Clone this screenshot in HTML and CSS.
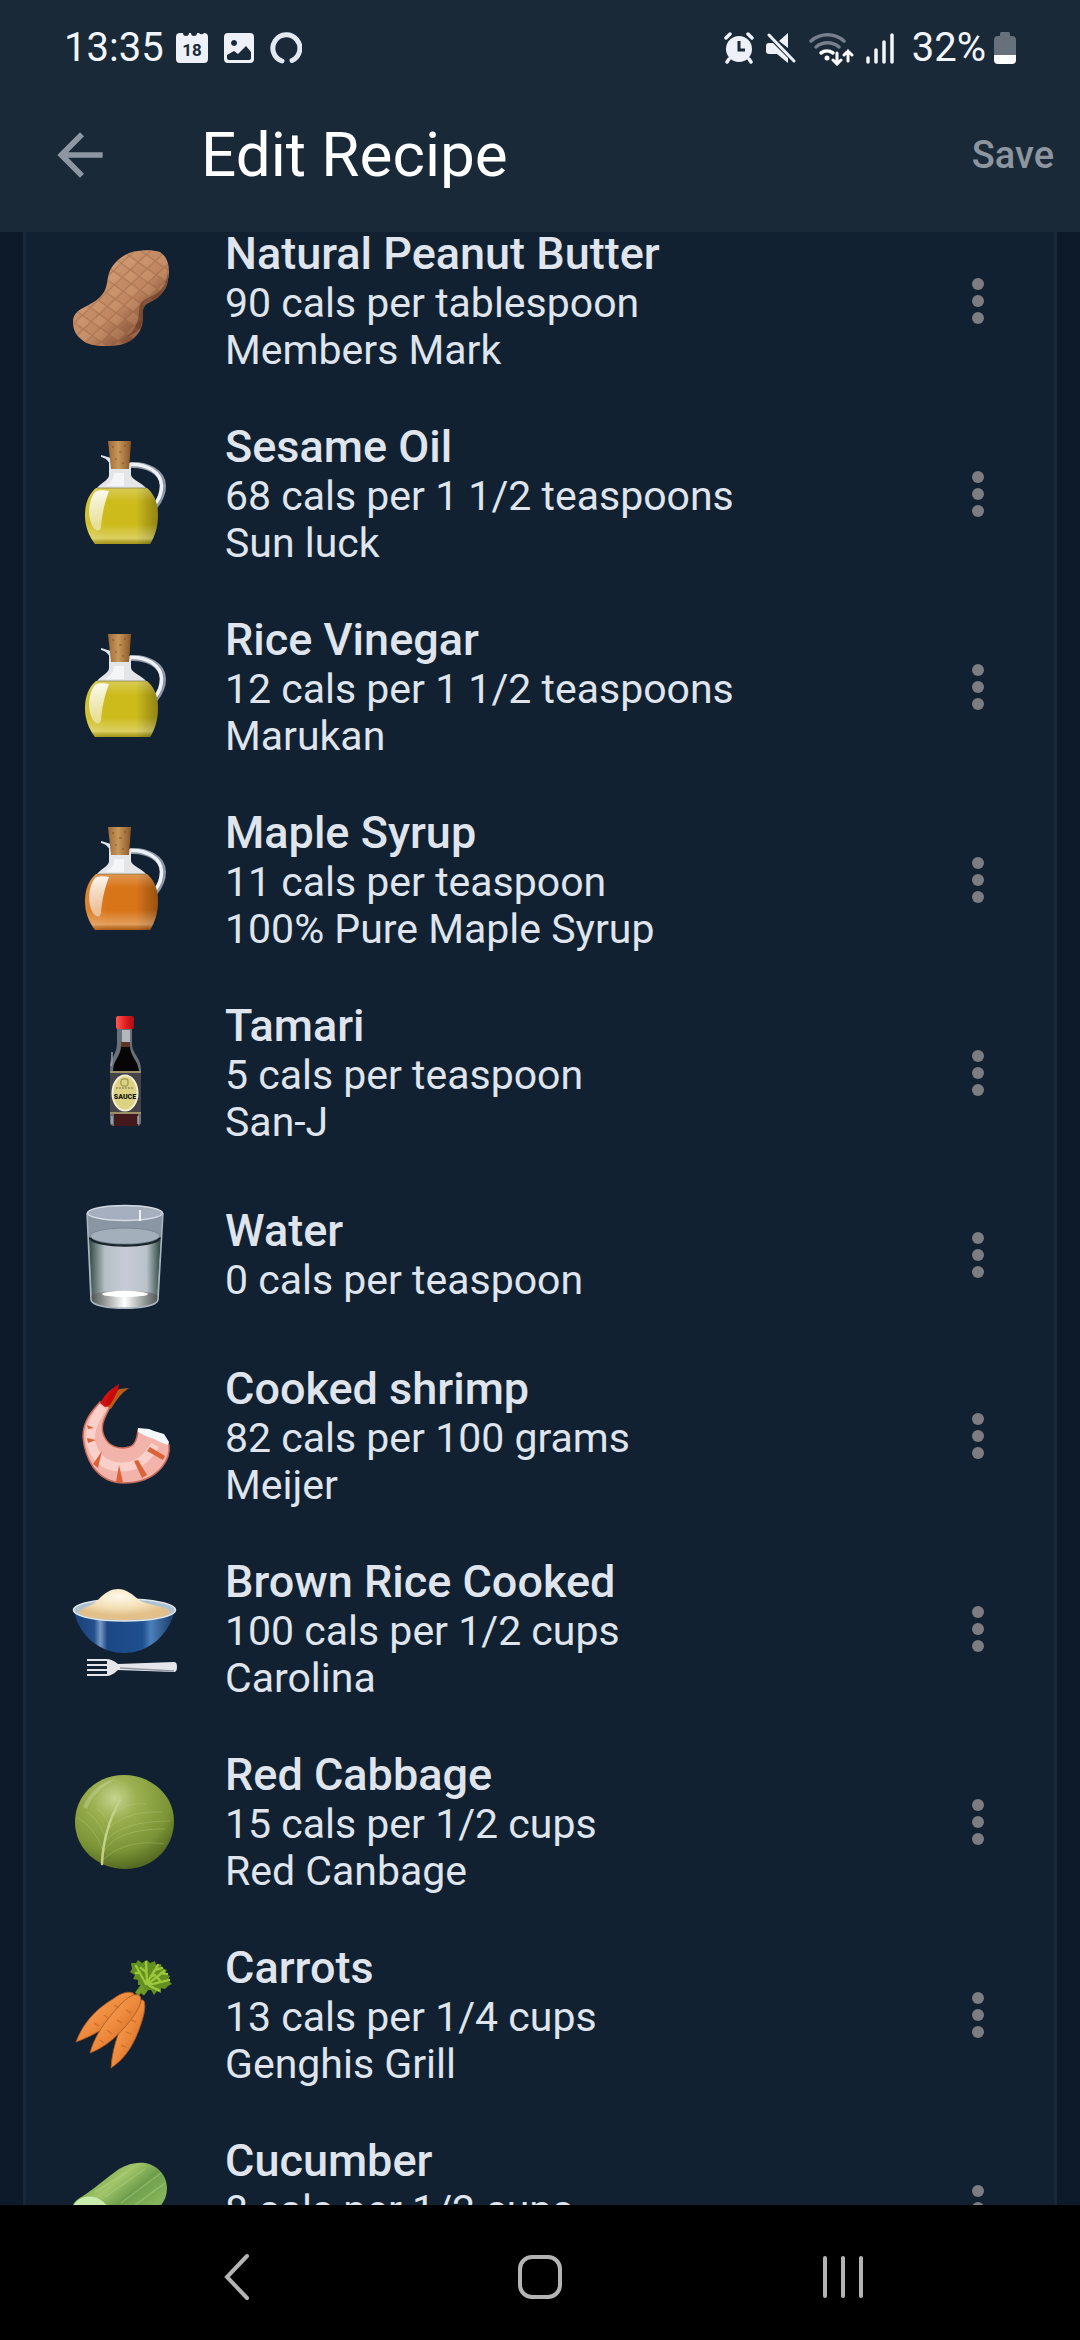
FILE: index.html
```html
<!DOCTYPE html>
<html lang="en">
<head>
    <meta charset="UTF-8">
    <meta name="viewport" content="width=device-width, initial-scale=1.0">
    <title>Edit Recipe</title>
    <link rel="stylesheet" href="styles.css">
</head>
<body>
    <!-- Shared gradients and symbols -->
    <svg class="defs" width="0" height="0" aria-hidden="true">
        <defs>
            <linearGradient id="cork" x1="0" x2="1"><stop offset="0" stop-color="#9c6a38"/><stop offset=".45" stop-color="#c8975c"/><stop offset="1" stop-color="#8a5826"/></linearGradient>
            <linearGradient id="liquidSides" x1="0" x2="1"><stop offset="0" stop-color="#fff" stop-opacity=".12"/><stop offset=".3" stop-color="#fff" stop-opacity="0"/><stop offset=".7" stop-color="#000" stop-opacity="0"/><stop offset="1" stop-color="#000" stop-opacity=".3"/></linearGradient>
            <linearGradient id="liquidShine" x1="0" y1="0" x2="0" y2="1"><stop offset="0" stop-color="#fff" stop-opacity=".25"/><stop offset=".25" stop-color="#fff" stop-opacity="0"/><stop offset=".65" stop-color="#fff" stop-opacity="0"/><stop offset=".9" stop-color="#fff" stop-opacity=".3"/><stop offset="1" stop-color="#000" stop-opacity=".2"/></linearGradient>
            <linearGradient id="highlight" x1="0" y1="0" x2="0" y2="1"><stop offset="0" stop-color="#fff" stop-opacity=".9"/><stop offset="1" stop-color="#fff" stop-opacity=".45"/></linearGradient>
            <linearGradient id="peanut" x1="0" y1="0" x2="1" y2="1"><stop offset=".2" stop-color="#d09a72"/><stop offset=".55" stop-color="#bf8660"/><stop offset=".85" stop-color="#6e3d27"/></linearGradient>
            <pattern id="shell" width="17" height="14" patternUnits="userSpaceOnUse" patternTransform="rotate(-4)"><path d="M0 7 8.5 0 17 7 8.5 14z" fill="#dda981" fill-opacity=".25" stroke="#93603f" stroke-opacity=".5" stroke-width="1.3"/></pattern>
            <linearGradient id="glass" x1="0" x2="1"><stop offset="0" stop-color="#30493f"/><stop offset=".22" stop-color="#b5bfc6"/><stop offset=".5" stop-color="#c6ccd5"/><stop offset=".8" stop-color="#b9c2ca"/><stop offset="1" stop-color="#2c443c"/></linearGradient>
            <linearGradient id="base" x1="0" x2="1"><stop offset="0" stop-color="#4c5450"/><stop offset=".5" stop-color="#fff"/><stop offset="1" stop-color="#4c5450"/></linearGradient>
            <linearGradient id="bowl" x1="0" x2="1"><stop offset="0" stop-color="#1a4076"/><stop offset=".2" stop-color="#24508c"/><stop offset=".26" stop-color="#7699c4"/><stop offset=".33" stop-color="#1c4885"/><stop offset=".68" stop-color="#1e4f8f"/><stop offset=".76" stop-color="#4c80bb"/><stop offset="1" stop-color="#173762"/></linearGradient>
            <radialGradient id="rice" cx=".45" cy=".25" r=".6"><stop offset="0" stop-color="#fff9ea"/><stop offset=".6" stop-color="#f3dfb6"/><stop offset="1" stop-color="#e3c08a"/></radialGradient>
            <radialGradient id="cabbage" cx=".4" cy=".25" r=".75"><stop offset="0" stop-color="#c6d490"/><stop offset=".3" stop-color="#9bb050"/><stop offset=".75" stop-color="#7b9436"/><stop offset="1" stop-color="#566b22"/></radialGradient>
            <linearGradient id="carrot" x1="0" y1="0" x2="1" y2="1"><stop offset="0" stop-color="#f8b06a"/><stop offset=".5" stop-color="#ee8a3c"/><stop offset="1" stop-color="#bd5a18"/></linearGradient>
            <linearGradient id="cucumber" x1="0" y1="0" x2="1" y2="1"><stop offset=".1" stop-color="#66953e"/><stop offset=".35" stop-color="#a2c56a"/><stop offset=".5" stop-color="#6f9f4c"/><stop offset=".7" stop-color="#86b45c"/><stop offset="1" stop-color="#4c7c34"/></linearGradient>
            <linearGradient id="cap" x1="0" x2="1"><stop offset="0" stop-color="#ff5a52"/><stop offset=".5" stop-color="#e22222"/><stop offset="1" stop-color="#a80d12"/></linearGradient>
        </defs>
        <symbol id="flask" viewBox="0 0 112 112">
            <path d="M61 26c17-1 33 7 33 21 0 8-3 14-8 20" fill="none" stroke="#8e99a8" stroke-width="6"/>
            <path d="M61 25.5c16-1 31 7 31.500 21 0 8-2 13-6 18" fill="none" stroke="#eef2f6" stroke-width="3.5"/>
            <path d="M32 16l10 3v9c-2-6-5-9-10-10z" fill="#dfe6ee"/>
            <path d="M40 24h22v12c1 5 10 7 16 14H27c6-7 13-9 13-14z" fill="#e3e5e9"/>
            <path d="M45 34h10v13H36c6-4 9-7 9-13z" fill="#fff" opacity=".6"/>
            <path d="M27 49h51c7 6 11 15 11 27 0 11-3 21-8 29H26c-6-8-10-17-10-29 0-12 4-21 11-27z" fill="currentColor"/>
            <path d="M27 49h51c7 6 11 15 11 27 0 11-3 21-8 29H26c-6-8-10-17-10-29 0-12 4-21 11-27z" fill="url(#liquidSides)"/>
            <path d="M27 49h51c7 6 11 15 11 27 0 11-3 21-8 29H26c-6-8-10-17-10-29 0-12 4-21 11-27z" fill="url(#liquidShine)"/>
            <path d="M28 49h49" stroke="#6f6c35" stroke-opacity=".6"/>
            <path d="M26 53c3-2 9-2 14-1-5 13-7 24-8 36-1 5-5 4-8 0-6-10-5-26 2-35z" fill="url(#highlight)"/>
            <path d="M39 2h23l-2 28H42z" fill="url(#cork)"/>
            <path d="M43 8h2M50 13h3M55 7h2M46 20h2M53 24h2" stroke="#76461c" stroke-width="1.5" opacity=".5"/>
        </symbol>
        <symbol id="dots" viewBox="0 0 72 72">
            <circle cx="36" cy="18" r="6"/><circle cx="36" cy="35" r="6"/><circle cx="36" cy="52" r="6"/>
        </symbol>
    </svg>

    <header class="header">
        <div class="status-bar">
            <span class="status-text">13:35</span>
            <div class="status-icons left">
                <svg width="32" height="32" viewBox="0 0 32 32">
                    <path d="M4 1h3a3 3 0 0 0 6 0h2a3 3 0 0 0 6 0h2a3 3 0 0 0 5 0q4 0 4 4v22q0 4-4 4H4q-4 0-4-4V5q0-4 4-4z" fill="#eef2f8"/>
                    <text class="calendar-day" x="16" y="24" text-anchor="middle">18</text>
                </svg>
                <svg width="32" height="32" viewBox="0 0 32 32">
                    <path fill-rule="evenodd" d="M5 1h22q4 0 4 4v22q0 4-4 4H5q-4 0-4-4V5q0-4 4-4zM4 23v3q0 2 2 2h20q2 0 2-2v-6l-5-6-8 8-4-3zM11 8a3 3 0 1 0 .1 0z" fill="#eef2f8"/>
                </svg>
                <svg width="32" height="32" viewBox="0 0 32 32" fill="none" stroke="#e2e9f3" stroke-width="5" stroke-linecap="round">
                    <path d="M12 29A13.5 13.5 0 1 1 22 28.500"/>
                </svg>
            </div>
            <div class="status-icons right">
                <svg width="30" height="32" viewBox="0 0 30 32" fill="none" stroke="#eef2f8" stroke-linecap="round">
                    <circle cx="15" cy="17" r="13" fill="#eef2f8" stroke="none"/>
                    <path d="M2 6l4-4M28 6l-4-4M5 27l-2 3M25 27l2 3" stroke-width="3.5"/>
                    <path d="M15 9v9h6" stroke="#1a2938" stroke-width="3" stroke-linecap="butt"/>
                </svg>
                <svg width="30" height="32" viewBox="0 0 30 32" fill="#eef2f8">
                    <path d="M0 14q0-3 3-3h4l15 15v5L11 22H3q-3 0-3-3zM13 9l9-8v15z"/>
                    <path d="M3 3l25 26" stroke="#eef2f8" stroke-width="3" stroke-linecap="round"/>
                </svg>
                <svg width="46" height="36" viewBox="0 0 46 36" fill="none" stroke-width="3.5" stroke-linecap="round">
                    <path d="M3 11a25 25 0 0 1 33 0M8 17a18 18 0 0 1 23 0" stroke="#75808c"/>
                    <path d="M13 23a10 10 0 0 1 12 0" stroke="#fff"/>
                    <circle cx="19" cy="28" r="2.5" fill="#fff"/>
                    <path d="M29 23v10M25 30l4 4 4-4M40 31V21M36 25l4-4 4 4" stroke="#fff" stroke-width="3"/>
                </svg>
                <svg width="28" height="32" viewBox="0 0 28 32" stroke="#f2f6fb" stroke-width="3.5" stroke-linecap="round">
                    <path d="M2 26v4M10 18v12M18 10v20M26 3v27"/>
                </svg>
            </div>
            <span class="status-text">32%</span>
            <svg width="22" height="32" viewBox="0 0 22 32">
                <path d="M7 0h8q1 0 1 4h2q4 0 4 4v16H0V8q0-4 4-4h2q0-4 1-4z" fill="#66717c"/>
                <path d="M0 23h22v5q0 4-4 4H4q-4 0-4-4z" fill="#fff"/>
            </svg>
        </div>
        <div class="app-bar">
            <button class="back" type="button" aria-label="Back">
                <svg width="68" height="68" viewBox="0 0 24 24"><path d="M20 11H7.830l5.590-5.590L12 4l-8 8 8 8 1.410-1.410L7.830 13H20v-2z"/></svg>
            </button>
            <h1>Edit Recipe</h1>
            <button class="save" type="button">Save</button>
        </div>
    </header>

    <main class="content">
        <ul class="ingredients">
            <li class="row">
                <svg class="food" viewBox="0 0 112 112">
                    <path d="M4 76c0-7 4-11 10-14 9-5 16-8 21-16 5-9 2-16 8-25C49 12 58 6 69 5c7-1 16-1 22 1 7 5 9 12 9 20-1 10-2 15-6 20-4 6-9 8-13 10-6 3-7 6-7 11 0 8 0 16-7 23-7 8-17 10-30 10-11 0-19-1-25-7-5-4-8-9-8-17z" fill="url(#peanut)"/>
                    <path d="M4 76c0-7 4-11 10-14 9-5 16-8 21-16 5-9 2-16 8-25C49 12 58 6 69 5c7-1 16-1 22 1 7 5 9 12 9 20-1 10-2 15-6 20-4 6-9 8-13 10-6 3-7 6-7 11 0 8 0 16-7 23-7 8-17 10-30 10-11 0-19-1-25-7-5-4-8-9-8-17z" fill="url(#shell)"/>
                    <path d="M99 24c-1 12-5 21-16 26-10 4-13 7-13 15 0 10-4 20-13 26 16-5 17-14 17-24 0-5 1-8 7-11 12-6 19-13 18-32z" fill="#5a2c1a" opacity=".5"/>
                </svg>
                <div class="info"><h2>Natural Peanut Butter</h2><p>90 cals per tablespoon</p><p>Members Mark</p></div>
                <button class="more" type="button" aria-label="More options"><svg width="72" height="72"><use href="#dots"/></svg></button>
            </li>
            <li class="row">
                <svg class="food" viewBox="0 0 112 112"><use class="flask-oil" href="#flask"/></svg>
                <div class="info"><h2>Sesame Oil</h2><p>68 cals per 1 1/2 teaspoons</p><p>Sun luck</p></div>
                <button class="more" type="button" aria-label="More options"><svg width="72" height="72"><use href="#dots"/></svg></button>
            </li>
            <li class="row">
                <svg class="food" viewBox="0 0 112 112"><use class="flask-oil" href="#flask"/></svg>
                <div class="info"><h2>Rice Vinegar</h2><p>12 cals per 1 1/2 teaspoons</p><p>Marukan</p></div>
                <button class="more" type="button" aria-label="More options"><svg width="72" height="72"><use href="#dots"/></svg></button>
            </li>
            <li class="row">
                <svg class="food" viewBox="0 0 112 112"><use class="flask-syrup" href="#flask"/></svg>
                <div class="info"><h2>Maple Syrup</h2><p>11 cals per teaspoon</p><p>100% Pure Maple Syrup</p></div>
                <button class="more" type="button" aria-label="More options"><svg width="72" height="72"><use href="#dots"/></svg></button>
            </li>
            <li class="row">
                <svg class="food" viewBox="0 0 112 112">
                    <path d="M48 10h15v16c0 10 9 13 9 26v52q0 4-4 4H45q-4 0-4-4V52c0-13 7-16 7-26z" fill="#687078"/>
                    <path d="M52 24h9v4c0 10 8 14 9 25H44c0-11 8-15 8-25z" fill="#070506"/>
                    <path d="M52 24h9v5h-9z" fill="#5c3426"/>
                    <path d="M53 12h8v12h-8z" fill="#b3b8c0"/>
                    <path d="M45 96h24v12H45z" fill="#43191b"/>
                    <path d="M41 53h31v43H41z" fill="#45434a"/>
                    <path d="M41 54h31M41 95h31" stroke="#b8ac70" stroke-width="1.5"/>
                    <ellipse cx="56" cy="75" rx="12.5" ry="17.5" fill="#dcd283" stroke="#f2eed0" stroke-width="2"/>
                    <rect x="52" y="61" width="7" height="7" rx="2" fill="none" stroke="#8e8540"/>
                    <path d="M47 70h18" stroke="#777045" stroke-dasharray="2 1"/>
                    <text class="sauce" x="56" y="81" text-anchor="middle">SAUCE</text>
                    <path d="M43 34q0 9-1 14M43 98v8M69 98v8" stroke="#b8bdc5" stroke-width="2" opacity=".6"/>
                    <rect x="47" y="-2" width="18" height="13" rx="2" fill="url(#cap)"/>
                </svg>
                <div class="info"><h2>Tamari</h2><p>5 cals per teaspoon</p><p>San-J</p></div>
                <button class="more" type="button" aria-label="More options"><svg width="72" height="72"><use href="#dots"/></svg></button>
            </li>
            <li class="row">
                <svg class="food" viewBox="0 0 112 112">
                    <path d="M18 13l4 87c2 11 65 11 67 0l5-87z" fill="#8b96a5"/>
                    <path d="M20 37h72l-4 60c-6 10-60 10-65 0z" fill="url(#glass)"/>
                    <ellipse cx="56" cy="36" rx="35" ry="8" fill="#a4afbc" stroke="#7a8693"/>
                    <path d="M21 38c5 10 65 10 70 0" fill="none" stroke="#17252a" stroke-width="2.5"/>
                    <path d="M22 96c5-7 62-7 67 0l-1 5c-6 9-60 9-66 0z" fill="url(#base)"/>
                    <ellipse cx="56" cy="94" rx="23" ry="3" fill="#fff"/>
                    <path d="M18 13l4 87c2 11 65 11 67 0l5-87" fill="none" stroke="#a9b5c0" stroke-width="1.5"/>
                    <ellipse cx="56" cy="13" rx="37.5" ry="7.5" fill="#a5afbf" stroke="#d3dae3" stroke-width="1.5"/>
                    <path d="M71 10v11" stroke="#fff" stroke-width="2" opacity=".8"/>
                </svg>
                <div class="info"><h2>Water</h2><p>0 cals per teaspoon</p></div>
                <button class="more" type="button" aria-label="More options"><svg width="72" height="72"><use href="#dots"/></svg></button>
            </li>
            <li class="row">
                <svg class="food" viewBox="0 0 112 112">
                    <path d="M31 21C19 34 14 43 14 56c1 12 4 21 10 30 8 11 18 16 31 16 15 0 29-5 38-16 5-6 8-13 7-22l-8-10-23-5c-1 10-4 16-9 17-10 3-20-1-24-9-6-11-1-19 5-31z" fill="#f2b3aa" stroke="#c46a58" stroke-width="1.5"/>
                    <path d="M34 26c-9 12-14 24-12 36 4 15 14 23 28 24 16 1 27-6 36-22" fill="none" stroke="#ffe1dc" stroke-width="9" opacity=".65"/>
                    <path d="M18 44l7 3-6 1zM18 57l9 2-8 3zM24 83l9-13-4 17zM47 101l3-17 4 17zM73 97l-8-17 4-1 9 15zM94 79L78 70l3-4 15 9z" fill="#db6337"/>
                    <path d="M69 47l11 1 5 2 10 3 5 8-1 3-8-3-6-3-8-3-8-4z" fill="#f3f8fc"/>
                    <path d="M40 10q-6 6-9 12l5 4 6-1q6-9 8-22z" fill="#cf1110"/>
                    <path d="M39 26q4-10 11-18l10-1q-6 4-10 9t-8 12z" fill="#b85c18"/>
                    <path d="M36 24q3-11 14-21-1 9-9 21z" fill="#c70b0d"/>
                </svg>
                <div class="info"><h2>Cooked shrimp</h2><p>82 cals per 100 grams</p><p>Meijer</p></div>
                <button class="more" type="button" aria-label="More options"><svg width="72" height="72"><use href="#dots"/></svg></button>
            </li>
            <li class="row">
                <svg class="food" viewBox="0 0 112 112">
                    <path d="M5 37c5 25 26 42 50 42s44-17 51-42z" fill="url(#bowl)"/>
                    <ellipse cx="55.5" cy="36" rx="51" ry="11" fill="#adc1d0" stroke="#dde5ea" stroke-width="1.5"/>
                    <path d="M10 37c5-4 13-5 19-11 7-8 14-11 20-11 9 0 15 6 21 11 8 5 22 5 31 11 1 6-20 9-46 9S9 43 10 37z" fill="url(#rice)"/>
                    <path d="M18 85h19q6 0 12 5l56-2q3 0 3 5t-3 5l-56-2q-6 6-12 6H18v-2h20v-3H18v-2h20v-3H18v-2h20v-3H18z" fill="#e5e6eb"/>
                    <path d="M51 94l54 3" stroke="#9297a1" stroke-width="1.5"/>
                </svg>
                <div class="info"><h2>Brown Rice Cooked</h2><p>100 cals per 1/2 cups</p><p>Carolina</p></div>
                <button class="more" type="button" aria-label="More options"><svg width="72" height="72"><use href="#dots"/></svg></button>
            </li>
            <li class="row">
                <svg class="food" viewBox="0 0 112 112">
                    <path d="M6 55C6 28 28 8 55 8s50 20 50 46c0 28-22 48-49 48S6 82 6 55z" fill="url(#cabbage)"/>
                    <g fill="none" stroke="#c3d28a" stroke-linecap="round">
                        <path d="M33 97c1-25 8-46 18-64" stroke-width="2.5"/>
                        <path d="M35 84c10-16 31-22 61-22M37 74c11-14 34-20 64-20M41 60c12-11 30-16 52-15M35 92c13-13 36-19 60-15M45 46c9-8 20-10 32-9M34 84C28 66 19 57 9 51M37 72c-5-14-11-21-19-27M41 60c-3-9-8-15-13-18" opacity=".3"/>
                    </g>
                    <path d="M14 40Q24 17 47 12 25 23 18 42z" fill="#fff" opacity=".2"/>
                </svg>
                <div class="info"><h2>Red Cabbage</h2><p>15 cals per 1/2 cups</p><p>Red Canbage</p></div>
                <button class="more" type="button" aria-label="More options"><svg width="72" height="72"><use href="#dots"/></svg></button>
            </li>
            <li class="row">
                <svg class="food" viewBox="0 0 112 112">
                    <path d="M68 34l9-12M73 34l10-13" stroke="#6f9a28" stroke-width="5"/>
                    <path d="M62 3l5 0 2-3 4 3 5-3 3 3 5-2 1 4 5-1 1 4 5 2-2 4 5 2-2 4 4 4-4 2-3 3-4-1 0 5-4-2-3 4-3-5-6 0-3-5-4 0 0-5-5-1 2-4-5-3 2-3z" fill="#628f20"/>
                    <path d="M77 24L67 6M78 23L77 2M78 23l11-18M79 24l16-13M80 25l20-5M81 26l10 5M71 13l-6 0M77 12l-5-4M86 10l7-2M88 17l4 5M92 13l6 1M82 16l5-1" fill="none" stroke="#9cc63c" stroke-width="2.5" stroke-linecap="round" stroke-dasharray="4 2"/>
                    <g fill="url(#carrot)" stroke="#a95520" stroke-width=".8">
                        <path d="M64 33c-6-2-12 0-20 6C27 49 14 63 7 82c19-7 40-19 53-35 5-6 7-11 4-14z"/>
                        <path d="M74 40c4 3 1 16-3 27-6 17-14 31-29 41 1-17 6-34 15-51 6-11 12-18 17-17z"/>
                        <path d="M71 36c3 5-2 15-10 25C50 75 37 87 21 93c4-16 15-32 29-47 9-9 16-14 21-10z"/>
                    </g>
                    <path d="M25 63l5 3M35 55l5 4M45 45l5 3M38 70l5 4M48 60l5 3M57 50l5 3M31 80l4 3M57 72l5 2M62 60l5 2M52 85l5 2" stroke="#c76a28" stroke-width="1.5" opacity=".7"/>
                </svg>
                <div class="info"><h2>Carrots</h2><p>13 cals per 1/4 cups</p><p>Genghis Grill</p></div>
                <button class="more" type="button" aria-label="More options"><svg width="72" height="72"><use href="#dots"/></svg></button>
            </li>
            <li class="row">
                <svg class="food" viewBox="0 0 112 112">
                    <path d="M3 55c2-8 8-10 14-14 12-8 21-17 33-25 9-5 17-7 26-6 12 2 22 12 22 25 0 9-4 17-11 22L40 90z" fill="url(#cucumber)"/>
                    <path d="M26 39l32-20M36 44l40-28M52 50l40-30M66 52l30-22" stroke="#b9d88c" stroke-width="1.5" opacity=".4"/>
                    <ellipse cx="22" cy="62" rx="20" ry="18" fill="#c9ebab" transform="rotate(30 22 62)"/>
                </svg>
                <div class="info"><h2>Cucumber</h2><p>8 cals per 1/2 cups</p><p>&nbsp;</p></div>
                <button class="more" type="button" aria-label="More options"><svg width="72" height="72"><use href="#dots"/></svg></button>
            </li>
        </ul>
    </main>

    <nav class="nav-bar">
        <button type="button" aria-label="Back"><svg width="48" height="48" viewBox="0 0 48 48"><path d="M34 3L14 24l20 21"/></svg></button>
        <button type="button" aria-label="Home"><svg width="48" height="48" viewBox="0 0 48 48"><rect x="4" y="4" width="40" height="40" rx="12"/></svg></button>
        <button type="button" aria-label="Recent apps"><svg width="48" height="48" viewBox="0 0 48 48"><path d="M6 5v38M24 5v38M42 5v38"/></svg></button>
    </nav>
</body>
</html>
```
FILE: styles.css
```css
* {
    box-sizing: border-box;
}
body {
    margin: 0;
    height: 100vh;
    display: flex;
    flex-direction: column;
    overflow: hidden;
    font-family: Roboto, sans-serif;
    background: #0d1a2a;
    color: #dfe4ed;
}
h1, h2, p, ul {
    margin: 0;
    padding: 0;
    font-weight: 400;
}
button {
    border: none;
    padding: 0;
    background: none;
    font-family: inherit;
    cursor: pointer;
}
svg {
    display: block;
    flex: none;
}
.defs {
    position: absolute;
}

/* Header */
.header {
    background: #1a2938;
}
.status-bar {
    display: flex;
    align-items: center;
    height: 78px;
    padding: 18px 64px 0 64px;
}
.status-text {
    font-size: 40px;
    line-height: 48px;
    color: #f2f6fc;
}
.status-icons {
    display: flex;
    align-items: center;
}
.status-icons.left {
    gap: 15px;
    margin-left: 12px;
}
.status-icons.right {
    gap: 12px;
    margin-left: auto;
    margin-right: 18px;
}
.status-text + svg {
    margin-left: 8px;
}
.calendar-day {
    font-size: 17px;
    font-weight: 700;
    fill: #1a2938;
}
.app-bar {
    display: flex;
    align-items: center;
    height: 154px;
    padding: 0 26px 0 46px;
}
.back {
    width: 155px;
    fill: #8d97a3;
}
h1 {
    flex: 1;
    font-size: 62px;
    line-height: 72px;
    color: #ffffff;
}
.save {
    font-size: 38px;
    line-height: 48px;
    font-weight: 500;
    color: #8d959e;
}

/* Ingredient list */
.content {
    flex: 1;
    min-height: 0;
    overflow: hidden;
    padding: 0 23px;
}
.ingredients {
    list-style: none;
    margin-top: -28px; /* scrolled part way into the first row */
    background: #122131;
    border: solid #1a2938;
    border-width: 0 3px;
}
.row {
    display: flex;
    align-items: center;
    min-height: 170px;
    padding: 26px 40px 23px 43px;
}
.food {
    width: 112px;
    height: 112px;
    overflow: visible;
}
.flask-oil {
    color: #cdbb1c;
}
.flask-syrup {
    color: #d87518;
}
.sauce {
    font-size: 7px;
    font-weight: 900;
    fill: #15120c;
}
.info {
    flex: 1;
    margin-left: 44px;
}
h2 {
    margin-bottom: 2px;
    font-size: 45px;
    line-height: 48px;
    font-weight: 500;
}
.info p {
    font-size: 41px;
    line-height: 47px;
}
.more {
    width: 72px;
    height: 72px;
    fill: #7c7d80;
}

/* System navigation */
.nav-bar {
    display: flex;
    height: 135px;
    padding: 9px 86px 0;
    background: #000000;
}
.nav-bar button {
    flex: 1;
    display: flex;
    justify-content: center;
    align-items: center;
}
.nav-bar svg {
    fill: none;
    stroke: #b4b4b4;
    stroke-width: 4;
    stroke-linecap: round;
}
```
